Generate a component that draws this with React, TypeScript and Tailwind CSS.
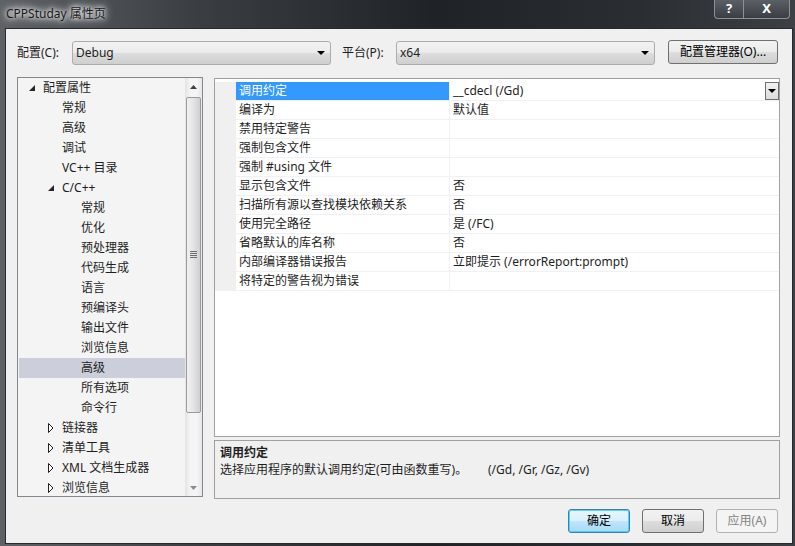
import React from 'react';

type TreeItem = { label: string; level: number; state?: 'open' | 'closed'; selected?: boolean };

const treeItems: TreeItem[] = [
  { label: '配置属性', level: 0, state: 'open' },
  { label: '常规', level: 1 },
  { label: '高级', level: 1 },
  { label: '调试', level: 1 },
  { label: 'VC++ 目录', level: 1 },
  { label: 'C/C++', level: 1, state: 'open' },
  { label: '常规', level: 2 },
  { label: '优化', level: 2 },
  { label: '预处理器', level: 2 },
  { label: '代码生成', level: 2 },
  { label: '语言', level: 2 },
  { label: '预编译头', level: 2 },
  { label: '输出文件', level: 2 },
  { label: '浏览信息', level: 2 },
  { label: '高级', level: 2, selected: true },
  { label: '所有选项', level: 2 },
  { label: '命令行', level: 2 },
  { label: '链接器', level: 1, state: 'closed' },
  { label: '清单工具', level: 1, state: 'closed' },
  { label: 'XML 文档生成器', level: 1, state: 'closed' },
  { label: '浏览信息', level: 1, state: 'closed' },
];

const props: [string, string][] = [
  ['调用约定', '__cdecl (/Gd)'],
  ['编译为', '默认值'],
  ['禁用特定警告', ''],
  ['强制包含文件', ''],
  ['强制 #using 文件', ''],
  ['显示包含文件', '否'],
  ['扫描所有源以查找模块依赖关系', '否'],
  ['使用完全路径', '是 (/FC)'],
  ['省略默认的库名称', '否'],
  ['内部编译器错误报告', '立即提示 (/errorReport:prompt)'],
  ['将特定的警告视为错误', ''],
];

const indents = ['pl-[25px]', 'pl-[44px]', 'pl-[63px]'];
const arrowPos = ['left-[11px]', 'left-[30px]', 'left-[49px]'];

function DownArrow() {
  return (
    <svg width="8" height="4" viewBox="0 0 8 4">
      <polygon points="0,0 8,0 4,4" fill="#000" />
    </svg>
  );
}

function Combo({ value }: { value: string }) {
  return (
    <div className="w-[259px] h-[24px] mt-[1px] flex items-center justify-between rounded-[3px] border border-[#acacac] bg-[linear-gradient(#f2f2f2,#ebebeb_50%,#dddddd_50%,#cfcfcf)] pl-[3px] pr-[5px]">
      <span>{value}</span>
      <DownArrow />
    </div>
  );
}

function Button({ label, kind, width }: { label: string; kind?: 'default' | 'disabled'; width: string }) {
  const look =
    kind === 'default'
      ? 'border-[#3c7fb1] bg-[linear-gradient(#eaf6fd,#d9f0fc_50%,#bee6fd_50%,#a7d9f5)] text-[#000] shadow-[inset_0_0_0_1px_#48d4fc]'
      : kind === 'disabled'
      ? 'border-[#adb2b5] bg-[#f4f4f4] text-[#838383]'
      : 'border-[#707070] bg-[linear-gradient(#f2f2f2,#ebebeb_50%,#dddddd_50%,#cfcfcf)] text-[#000]';
  return (
    <div className={`${width} h-[24px] flex items-center justify-center rounded-[3px] border ${look}`}>{label}</div>
  );
}

function TreeRow({ item }: { item: TreeItem }) {
  return (
    <div
      className={`relative shrink-0 h-[20px] flex items-center ${indents[item.level]} ${item.selected ? 'bg-[#cccedb] ml-[1px]' : ''}`}
    >
      {item.state === 'open' && (
        <svg className={`absolute top-[7px] ${arrowPos[item.level]}`} width="6" height="6" viewBox="0 0 6 6">
          <polygon points="6,0 6,6 0,6" fill="#262626" />
        </svg>
      )}
      {item.state === 'closed' && (
        <svg className={`absolute top-[5px] ${arrowPos[item.level]}`} width="6" height="10" viewBox="0 0 6 10">
          <polygon points="0.5,0.5 5,5 0.5,9.5" fill="#fff" stroke="#1e1e1e" strokeWidth="1" />
        </svg>
      )}
      <span className={item.selected ? '-ml-[1px]' : ''}>{item.label}</span>
    </div>
  );
}

function Scrollbar() {
  return (
    <div className="w-[17px] shrink-0 flex flex-col bg-[linear-gradient(90deg,#e3e3e3,#f4f4f4_30%,#f4f4f4_70%,#e6e6e6)]">
      <div className="h-[17px] shrink-0 flex items-center justify-center">
        <svg width="7" height="4" viewBox="0 0 7 4">
          <polygon points="0,4 7,4 3.5,0" fill="#404040" />
        </svg>
      </div>
      <div className="mt-[2px] mx-[1px] h-[316px] shrink-0 rounded-[2px] border border-[#9a9a9a] bg-[linear-gradient(90deg,#f1f1f1,#e4e4e4_50%,#cfcfcf)] flex items-center justify-center">
        <div className="flex flex-col gap-[1px] mt-[-2px]">
          <div className="w-[7px] h-[1px] bg-[#6e6e6e]" />
          <div className="w-[7px] h-[1px] bg-[#6e6e6e]" />
          <div className="w-[7px] h-[1px] bg-[#6e6e6e]" />
          <div className="w-[7px] h-[1px] bg-[#6e6e6e]" />
        </div>
      </div>
      <div className="flex-1" />
      <div className="h-[17px] shrink-0 flex items-center justify-center">
        <svg width="7" height="4" viewBox="0 0 7 4">
          <polygon points="0,0 7,0 3.5,4" fill="#8a8a8a" />
        </svg>
      </div>
    </div>
  );
}

export default function App() {
  return (
    <div
      className="w-[795px] h-[546px] flex flex-col overflow-hidden text-[12px] text-[#1e1e1e] bg-[linear-gradient(90deg,#5e6267_0%,#3a3e43_25%,#1f2327_55%,#2a2e33_80%,#3c4045_100%)]"
      style={{ fontFamily: '"Noto Sans", "Noto Sans CJK SC", sans-serif' }}
    >
      {/* Title bar */}
      <div className="relative h-[28px] shrink-0 flex items-start pl-[6px] pt-[5px]">
        <span className="text-[12px] text-[#1a1a1a] [text-shadow:0_0_4px_#fff,0_0_8px_#fff,0_0_10px_#ddd]">
          CPPStuday 属性页
        </span>
        <div className="absolute right-[5px] top-0 flex">
          <div className="w-[30px] h-[19px] flex items-center justify-center rounded-bl-[4px] border border-t-0 border-[#8d9196] bg-[linear-gradient(#5b6066,#3a3e44)] text-white font-bold text-[13px]">
            ?
          </div>
          <div className="w-[46px] h-[19px] flex items-center justify-center rounded-br-[4px] border border-t-0 border-l-0 border-[#8d9196] bg-[linear-gradient(#5b6066,#3a3e44)] text-white font-bold text-[13px]">
            X
          </div>
        </div>
      </div>

      {/* Client area */}
      <div className="flex-1 flex px-[5px] pb-[2px]">
        <div className="flex-1 flex flex-col border border-[#26292d] bg-[#f0f0f0] pl-[11px] pr-[12px] pt-[11px]">
          {/* Configuration row */}
          <div className="h-[25px] flex items-start">
            <div className="w-[55px] h-[25px] flex items-center">配置(C):</div>
            <Combo value="Debug" />
            <div className="w-[54px] ml-[11px] h-[25px] flex items-center">平台(P):</div>
            <Combo value="x64" />
            <div className="ml-[13px]">
              <Button label="配置管理器(O)..." width="w-[110px]" />
            </div>
          </div>

          {/* Main area */}
          <div className="mt-[12px] flex h-[422px]">
            <div className="w-[186px] h-[420px] flex border border-[#828790] bg-[#f4f4f4] overflow-hidden">
              <div className="flex-1 flex flex-col overflow-hidden">
                {treeItems.map((it, i) => (
                  <TreeRow key={i} item={it} />
                ))}
              </div>
              <Scrollbar />
            </div>

            <div className="ml-[11px] w-[566px] flex flex-col">
              <div className="mt-[1px] h-[359px] shrink-0 border border-[#a0a0a0] bg-white pt-[3px]">
                <div className="flex flex-col">
                  {props.map(([name, value], i) => (
                    <div key={i} className="h-[19px] shrink-0 flex">
                      <div className="w-[21px] bg-[#f0f0f0]" />
                      <div
                        className={`w-[214px] h-[19px] border-b border-r border-[#f0f1f6] pl-[3px] flex items-center ${
                          i === 0 ? 'bg-[#3399ff] text-white' : ''
                        }`}
                      >
                        {name}
                      </div>
                      <div className="flex-1 h-[19px] border-b border-[#f0f1f6] pl-[3px] flex items-center justify-between">
                        <span>{value}</span>
                        {i === 0 && (
                          <div className="w-[14px] h-[18px] border border-[#707070] bg-[linear-gradient(#f2f2f2,#dcdcdc)] flex items-center justify-center mb-[1px]">
                            <DownArrow />
                          </div>
                        )}
                      </div>
                    </div>
                  ))}
                </div>
              </div>
              <div className="mt-[3px] h-[59px] shrink-0 border border-[#a0a0a0] bg-[#f0f0f0] pl-[5px] pt-[3px] leading-[17px]">
                <div className="font-bold">调用约定</div>
                <div className="flex">
                  <span className="w-[268px]">选择应用程序的默认调用约定(可由函数重写)。</span>
                  <span>(/Gd, /Gr, /Gz, /Gv)</span>
                </div>
              </div>
            </div>
          </div>

          {/* Buttons */}
          <div className="mt-[10px] mr-[2px] flex justify-end gap-[12px]">
            <Button label="确定" kind="default" width="w-[62px]" />
            <Button label="取消" width="w-[62px]" />
            <Button label="应用(A)" kind="disabled" width="w-[62px]" />
          </div>
        </div>
      </div>
    </div>
  );
}
